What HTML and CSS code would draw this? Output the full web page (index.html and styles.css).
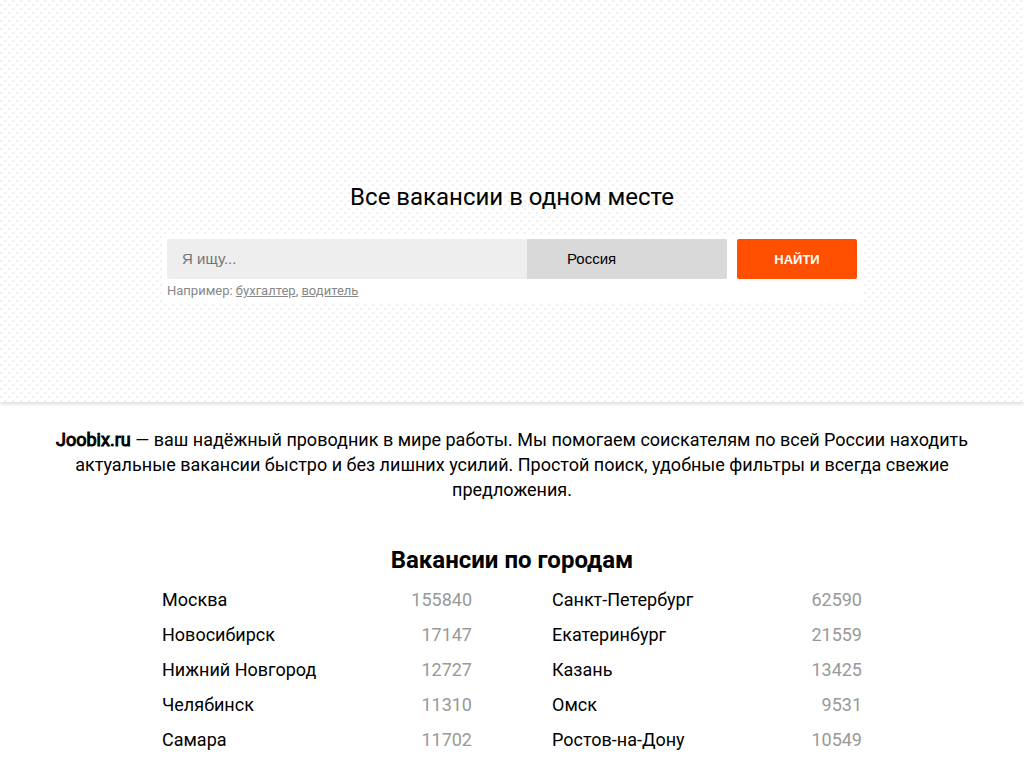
FILE: index.html
```
<!DOCTYPE html>
<html lang="ru">
<head>
  <meta charset="UTF-8">
  <meta name="viewport" content="width=device-width, initial-scale=1.0">
  <title>Joobix.ru</title>
  <link rel="stylesheet" href="styles.css">
</head>
<body>
  <header class="hero">
    <h1>Все вакансии в одном месте</h1>
    <form class="search" action="#">
      <div class="search-row">
        <input class="search-text" type="text" name="q" placeholder="Я ищу..." aria-label="Я ищу">
        <input class="search-place" type="text" name="place" value="Россия" aria-label="Регион">
        <button class="search-btn" type="submit">НАЙТИ</button>
      </div>
      <p class="example">Например: <a href="#">бухгалтер</a>, <a href="#">водитель</a></p>
    </form>
  </header>
  <main>
    <p class="about"><b>Joobix.ru</b> — ваш надёжный проводник в мире работы. Мы помогаем соискателям по всей России находить актуальные вакансии быстро и без лишних усилий. Простой поиск, удобные фильтры и всегда свежие предложения.</p>
    <h2>Вакансии по городам</h2>
    <ul class="cities">
      <li><a href="#">Москва</a><span>155840</span></li>
      <li><a href="#">Санкт-Петербург</a><span>62590</span></li>
      <li><a href="#">Новосибирск</a><span>17147</span></li>
      <li><a href="#">Екатеринбург</a><span>21559</span></li>
      <li><a href="#">Нижний Новгород</a><span>12727</span></li>
      <li><a href="#">Казань</a><span>13425</span></li>
      <li><a href="#">Челябинск</a><span>11310</span></li>
      <li><a href="#">Омск</a><span>9531</span></li>
      <li><a href="#">Самара</a><span>11702</span></li>
      <li><a href="#">Ростов-на-Дону</a><span>10549</span></li>
    </ul>
  </main>
</body>
</html>
```
FILE: styles.css
```
* {
  margin: 0;
  padding: 0;
  box-sizing: border-box;
}
body {
  font-family: Roboto, sans-serif;
  font-size: 18px;
  line-height: 25px;
  color: #000;
  background: #fff;
}
.hero {
  padding: 180px 20px 99px;
  /* two 2px dots in every 8px tile */
  background:
    conic-gradient(from 90deg at 6px 6px, #eee 25%, transparent 0) -2px 2px / 8px 8px,
    conic-gradient(from 90deg at 6px 6px, #eee 25%, transparent 0) 2px -2px / 8px 8px;
  box-shadow: 0 1px 5px rgba(0, 0, 0, 0.2);
}
h1 {
  margin-bottom: 20px;
  font-size: 24px;
  font-weight: 400;
  line-height: 34px;
  text-align: center;
}
.search {
  max-width: 700px;
  margin: 0 auto;
  padding: 5px 5px 2px;
  background: #fff;
}
.search-row {
  display: flex;
}
.search-text,
.search-place {
  height: 40px;
  border: none;
  font-family: "Liberation Sans", sans-serif;
  font-size: 15px;
  color: #000;
}
.search-text {
  flex: 1;
  min-width: 0;
  padding: 0 15px 1px;
  background: #eee;
  border-radius: 2px 0 0 2px;
}
.search-place {
  width: 200px;
  padding: 0 40px 1px;
  background: #d9d9d9;
  border-radius: 0 2px 2px 0;
}
.search-btn {
  width: 120px;
  height: 40px;
  margin-left: 10px;
  border: none;
  border-radius: 2px;
  background: #ff4f00;
  color: #fff;
  font-family: "Liberation Sans", sans-serif;
  font-size: 13px;
  font-weight: 700;
  cursor: pointer;
}
.example {
  padding-top: 2px;
  font-size: 13px;
  line-height: 20px;
  color: #888;
}
.example a {
  color: #888;
}
main {
  padding: 25px 50px;
}
.about {
  margin-bottom: 41px;
  text-align: center;
}
.about b {
  font-weight: 400;
  -webkit-text-stroke: 1px #000;
}
h2 {
  margin-bottom: 5px;
  font-size: 24px;
  line-height: 34px;
  text-align: center;
}
.cities {
  display: grid;
  grid-template-columns: 1fr 1fr;
  column-gap: 80px;
  max-width: 700px;
  margin: 0 auto;
  list-style: none;
}
.cities li {
  display: flex;
  justify-content: space-between;
  line-height: 35px;
}
.cities a {
  color: #000;
  text-decoration: none;
}
.cities span {
  color: #999;
}
```
